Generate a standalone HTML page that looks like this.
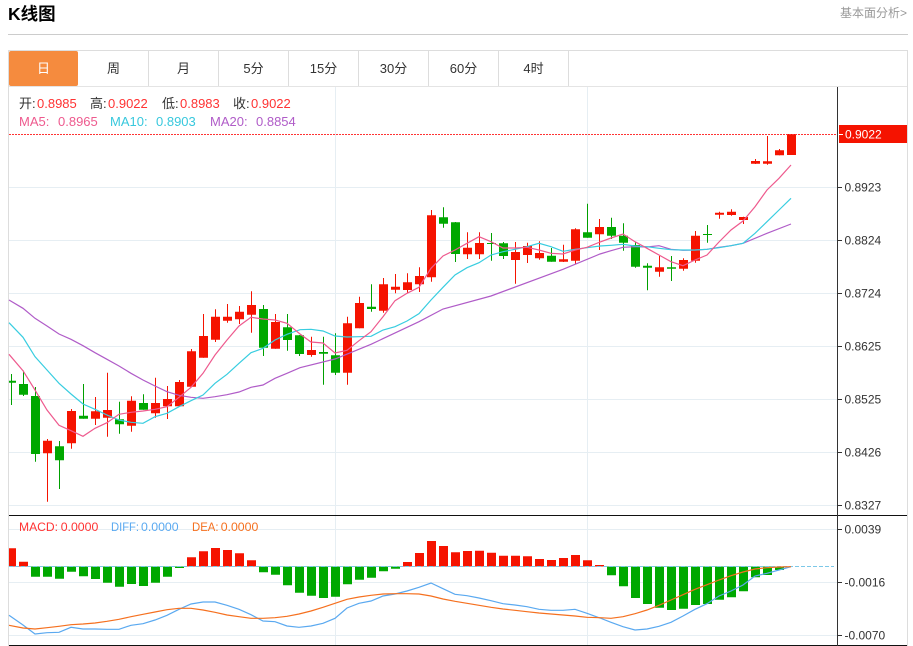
<!DOCTYPE html>
<html>
<head>
<meta charset="utf-8">
<style>
html,body{margin:0;padding:0;background:#fff;width:913px;height:646px;overflow:hidden;font-family:"Liberation Sans","Noto Sans CJK SC",sans-serif;}
.abs{position:absolute;white-space:nowrap;}
#title{left:8px;top:3px;font-size:17.5px;line-height:22px;font-weight:bold;color:#000;}
#more{left:840px;top:5px;font-size:12px;line-height:16px;color:#999;}
#rule{left:8px;top:34px;width:900px;height:1px;background:#ccc;}
#frame{left:8px;top:50px;width:898px;height:595px;border:1px solid #ddd;border-bottom:0;box-sizing:content-box;}
.tab{position:absolute;top:51px;height:35px;line-height:36px;text-align:center;font-size:13px;color:#333;border-right:1px solid #ddd;box-sizing:border-box;}
#act{background:#f58b3e;color:#fff;border-radius:2px;border-right:0;}
#tabline{left:9px;top:86px;width:898px;height:1px;background:#e4e4e4;}
svg{position:absolute;left:0;top:0;}
svg text{font-family:"Liberation Sans","Noto Sans CJK SC",sans-serif;}
</style>
</head>
<body>
<div class="abs" id="title">K线图</div>
<div class="abs" id="more">基本面分析&gt;</div>
<div class="abs" id="rule"></div>
<div class="abs" id="frame"></div>
<div class="tab" id="act" style="left:9px;width:69px">日</div>
<div class="tab" style="left:79px;width:70px">周</div>
<div class="tab" style="left:149px;width:70px">月</div>
<div class="tab" style="left:219px;width:70px">5分</div>
<div class="tab" style="left:289px;width:70px">15分</div>
<div class="tab" style="left:359px;width:70px">30分</div>
<div class="tab" style="left:429px;width:70px">60分</div>
<div class="tab" style="left:499px;width:70px">4时</div>
<div class="abs" id="tabline"></div>

<svg width="913" height="646" viewBox="0 0 913 646">
<!-- grid -->
<path d="M9 187.5H837M9 240.5H837M9 293.5H837M9 346.5H837M9 399.5H837M9 452.5H837M9 505.5H837M9 529.5H837M9 582.5H837M9 635.5H837M335.5 87V645M587.5 87V645" stroke="#e6eef3" stroke-width="1" fill="none"/>
<!-- red wicks -->
<path stroke="#f51300" fill="none" stroke-width="1" d="M47.5 439V501.7M71.5 409V448.7M95.5 397V425M107.5 372.7V436.7M131.5 396.3V431.7M155.5 377.7V417.7M167.5 386V419M179.5 380V406.7M191.5 349V386.7M203.5 314V357.7M215.5 309.3V342M227.5 304V322.7M239.5 306V324M251.5 291.3V332.7M275.5 314V348.7M311.5 336.7V356.7M347.5 316.7V384.7M359.5 296.7V328.3M383.5 278V312.7M395.5 274V293.3M407.5 273.3V292.7M419.5 267.3V292M431.5 210V281.7M467.5 232.3V259M479.5 232.3V259M515.5 242V283.7M527.5 242.7V263M539.5 241.3V259.7M563.5 244.7V262M575.5 228.3V264M599.5 219V250M659.5 256V276.7M683.5 258.3V270.7M695.5 231V262.7M719.5 211.7V218.7M731.5 209.3V215.7M743.5 216.7V224M755.5 159V164M767.5 136V164.7M779.5 149V155.3"/>
<!-- green wicks -->
<path stroke="#00a000" fill="none" stroke-width="1" d="M11.5 374V405M23.5 370.7V396M35.5 387V461.7M59.5 441V489M83.5 384V418.7M119.5 401.7V433.7M143.5 394.3V409.7M263.5 305V356M287.5 314V350.7M299.5 335V356M323.5 336.7V384.7M335.5 333.3V375M371.5 284.3V311.7M443.5 207.3V227.7M455.5 222V262M491.5 233V260.7M503.5 242V259M551.5 248V261.7M587.5 203.7V237.7M611.5 217.7V239M623.5 223.3V250.7M635.5 241.7V267.7M647.5 263.3V290.3M671.5 256V281M707.5 225V242.7"/>
<!-- red bodies -->
<path fill="#f51300" d="M43 440.7h9V453.3h-9zM67 411h9V443.3h-9zM91 411.3h9V418.7h-9zM103 410h9V417.7h-9zM127 400.7h9V425.7h-9zM151 403h9V413.3h-9zM163 399h9V406.3h-9zM175 382h9V406.3h-9zM187 351.3h9V386.7h-9zM199 336h9V357.7h-9zM211 316.7h9V339.7h-9zM223 316.7h9V320.7h-9zM235 311.7h9V319.3h-9zM247 305h9V314.7h-9zM271 322h9V348.7h-9zM307 350h9V355h-9zM343 323.3h9V372.7h-9zM355 303h9V328.3h-9zM379 284.3h9V310.7h-9zM391 286.7h9V289.7h-9zM403 282.3h9V290h-9zM415 276h9V284.3h-9zM427 215.3h9V277.3h-9zM463 247.7h9V254.3h-9zM475 243h9V254.3h-9zM511 252h9V260h-9zM523 246h9V255h-9zM535 253h9V258.3h-9zM559 259.3h9V261.7h-9zM571 229.3h9V260.7h-9zM595 227h9V234.3h-9zM655 267.3h9V271.7h-9zM679 260h9V268.7h-9zM691 235.7h9V260.7h-9zM715 212.7h9V214.7h-9zM727 211.7h9V215h-9zM739 217h9V220h-9zM751 161h9V163.7h-9zM763 161.3h9V163.7h-9zM775 150.3h9V155.3h-9zM787 134h9V155h-9z"/>
<!-- green bodies -->
<path fill="#00a800" d="M9 380.7h7V382.7h-7zM19 384h9V394.7h-9zM31 396h9V454h-9zM55 446.3h9V460.3h-9zM79 415.7h9V418.7h-9zM115 419.3h9V424.3h-9zM139 403h9V409.7h-9zM259 309h9V347.7h-9zM283 327.3h9V340h-9zM295 335.3h9V354h-9zM319 352h9V353.7h-9zM331 355.3h9V372.7h-9zM367 306.7h9V309h-9zM439 217.3h9V223.7h-9zM451 222.3h9V254h-9zM487 243h9V244h-9zM499 243.3h9V256h-9zM547 255.7h9V261.7h-9zM583 232.3h9V237.7h-9zM607 227h9V235.7h-9zM619 235.7h9V242.7h-9zM631 245h9V266.7h-9zM643 265.7h9V267.7h-9zM667 267.3h9V268.7h-9zM703 234h9V235h-9z"/>
<!-- MA lines -->
<polyline fill="none" stroke="#b05cc8" stroke-width="1.2" points="9,300 23,308.3 35,318.3 47,326 59,334 71,339.3 83,345.7 95,352.7 107,359.3 119,366 131,373.3 143,380 155,386 167,391.7 179,395.3 191,397.3 203,398.3 215,396.7 227,394.7 239,392 251,387.3 263,385 275,378.3 287,373.3 300,367.7 335,359 371,344.3 419,321.7 443,309 491,296 563,269.3 600,254 611,250.7 623,247.3 635,246.7 647,247 659,245.7 671,249.3 683,250.3 695,250 707,249.3 719,247.3 731,245.7 743,243.3 767,233.3 791,224"/>
<polyline fill="none" stroke="#38cde0" stroke-width="1.2" points="9,322.7 23,337.3 35,356.7 47,370 59,383.3 71,394 83,404 95,409.3 107,415 119,420 131,422.3 143,423.3 155,416.7 167,413.3 179,406.7 191,400.7 203,395 215,383.3 227,374.3 239,363.3 251,352.7 263,348.3 275,340 287,334.3 300,329.7 311,329.3 323,331 335,336 347,337 359,336.7 371,336.3 383,330 395,326.7 407,321 419,313.7 431,300 443,287.3 455,275 467,267.7 479,262.7 491,255 503,251.7 515,249.3 527,246.7 539,243.3 551,246.7 563,251.3 575,249.3 587,247.7 600,246 611,245.3 623,244.3 635,246 647,246.7 659,248.3 671,249.7 683,250 695,250 707,249.3 719,247.7 731,245.7 743,243.3 755,233.3 767,221.7 779,210 791,198.3"/>
<polyline fill="none" stroke="#ee5a8e" stroke-width="1.2" points="9,354.3 23,370.7 35,390 47,410 59,425.3 71,430.7 83,436.3 95,428.3 107,422.7 119,414.3 131,412.3 143,411 155,409.3 167,406.7 179,397.3 191,387.3 203,373.3 215,355 227,340 239,326 251,317.3 263,319 275,320 287,323.3 300,334 311,342 323,343 335,353 347,350.3 359,340.7 371,331.7 383,316.7 395,300.7 407,293.3 419,287.3 431,268.3 443,256 455,250 467,243.3 479,236.7 491,241.7 503,248 515,248 527,247.3 539,250 551,253.3 563,254 575,250 587,247.3 600,242 611,238 623,234 635,241.7 647,248.3 659,255 671,261.7 683,265.7 695,260 707,255 719,242 731,230 743,221 755,206.7 767,190 779,178.3 791,165"/>
<!-- last price dotted -->
<path d="M9 134.5H837" stroke="#f33" stroke-width="1" stroke-dasharray="2 1" fill="none"/>
<!-- MACD bars red -->
<path fill="#f51300" d="M9 548.3h7V566.5h-7zM19 561.7h9V566.5h-9zM187 557.3h9V566.5h-9zM199 551.3h9V566.5h-9zM211 548h9V566.5h-9zM223 550h9V566.5h-9zM235 553.3h9V566.5h-9zM247 560.3h9V566.5h-9zM403 562h9V566.5h-9zM415 553h9V566.5h-9zM427 541h9V566.5h-9zM439 546h9V566.5h-9zM451 552.3h9V566.5h-9zM463 551h9V566.5h-9zM475 550.7h9V566.5h-9zM487 552.7h9V566.5h-9zM499 555.7h9V566.5h-9zM511 555.7h9V566.5h-9zM523 556.3h9V566.5h-9zM535 559h9V566.5h-9zM547 560h9V566.5h-9zM559 558h9V566.5h-9zM571 555h9V566.5h-9zM583 560.3h9V566.5h-9zM595 565h9V566.5h-9z"/>
<!-- MACD bars green -->
<path fill="#00a800" d="M31 566.5h9V576.7h-9zM43 566.5h9V576.7h-9zM55 566.5h9V578.7h-9zM67 566.5h9V571.7h-9zM79 566.5h9V576.3h-9zM91 566.5h9V579h-9zM103 566.5h9V582.7h-9zM115 566.5h9V586.7h-9zM127 566.5h9V584h-9zM139 566.5h9V586h-9zM151 566.5h9V582.7h-9zM163 566.5h9V576.7h-9zM175 566.5h9V568h-9zM259 566.5h9V572.3h-9zM271 566.5h9V574.7h-9zM283 566.5h9V585.3h-9zM295 566.5h9V592.7h-9zM307 566.5h9V595.7h-9zM319 566.5h9V598h-9zM331 566.5h9V596.7h-9zM343 566.5h9V584.3h-9zM355 566.5h9V579.7h-9zM367 566.5h9V577.7h-9zM379 566.5h9V571.3h-9zM391 566.5h9V568.7h-9zM607 566.5h9V575.3h-9zM619 566.5h9V586.3h-9zM631 566.5h9V598h-9zM643 566.5h9V604h-9zM655 566.5h9V607.7h-9zM667 566.5h9V610h-9zM679 566.5h9V608.7h-9zM691 566.5h9V605h-9zM703 566.5h9V604h-9zM715 566.5h9V599.7h-9zM727 566.5h9V597.3h-9zM739 566.5h9V591.3h-9zM751 566.5h9V577.3h-9zM763 566.5h9V575h-9zM775 566.5h9V570h-9z"/>
<path d="M9 566.5H834" stroke="#7cc8e8" stroke-width="1" stroke-dasharray="4 2" fill="none"/>
<!-- DIFF -->
<polyline fill="none" stroke="#5aa9f0" stroke-width="1.2" points="9,615.3 23,625 35,634 47,632.7 59,632.3 71,627.3 83,629 95,629 107,629.3 119,629.3 131,625.3 143,623.7 155,620 167,615.3 179,609.3 191,604 203,602 215,602 227,605.3 239,609.3 251,614.7 263,621 275,621.7 287,626 299,627.3 311,626 323,623.3 335,618.3 347,608 359,603.3 371,601 383,596 395,594 407,591 419,587.3 431,583 443,588.7 455,594.3 467,595.7 479,598 491,600.7 503,603.7 515,605 527,606.7 539,609.3 551,610.3 563,610.3 575,609.3 587,613.3 600,618 611,622.3 623,626.7 635,630 647,629 659,626.3 671,622.3 683,616 695,609.3 707,603.7 719,596 731,591 743,585 755,576 767,573.3 779,570 791,566.7"/>
<!-- DEA -->
<polyline fill="none" stroke="#f5701f" stroke-width="1.2" points="9,625.3 23,628 35,629 47,627.7 59,626.3 71,624.7 83,624 95,623 107,621.3 119,619.3 131,616.7 143,614.3 155,612 167,609.7 179,608.3 191,608.3 203,610 215,612.3 227,615 239,616.7 251,618.3 263,618.3 275,617.7 287,616.3 299,614 311,611 323,607.3 335,603.3 347,599.3 359,597 371,595.3 383,594 395,593.7 407,593.7 419,594 431,596 443,599 455,601.3 467,603.3 479,605.3 491,607.3 503,609 515,610.3 527,611.7 539,613 551,614 563,615 575,616 587,617.3 600,617.7 611,618.3 623,616.7 635,613.7 647,610 659,605.3 671,600 683,594.7 695,589.3 707,584.7 719,580 731,575.7 743,572 755,569 767,567.7 779,567 791,566.7"/>
<!-- axes -->
<path d="M9 515.5H907M9 645.5H907" stroke="#111" stroke-width="1" fill="none"/>
<path d="M837.5 87V646" stroke="#333" stroke-width="1" fill="none"/>
<path d="M838 187.5h4M838 240.5h4M838 293.5h4M838 346.5h4M838 399.5h4M838 452.5h4M838 505.5h4M838 529.5h4M838 582.5h4M838 635.5h4" stroke="#333" stroke-width="1" fill="none"/>
<rect x="839" y="125" width="68" height="18" fill="#f51300"/>
<path d="M839 134.5h4" stroke="#fff" stroke-width="1"/>
<!-- axis labels -->
<g font-size="12" fill="#333">
<text x="844.5" y="191.5">0.8923</text>
<text x="844.5" y="244.5">0.8824</text>
<text x="844.5" y="297.5">0.8724</text>
<text x="844.5" y="350.5">0.8625</text>
<text x="844.5" y="403.5">0.8525</text>
<text x="844.5" y="456.5">0.8426</text>
<text x="844.5" y="509.5">0.8327</text>
<text x="844.5" y="533.5">0.0039</text>
<text x="844.5" y="586.5">-0.0016</text>
<text x="844.5" y="639.5">-0.0070</text>
<text x="845" y="138.5" fill="#fff">0.9022</text>
</g>
<!-- legend -->
<g font-size="13">
<text x="19" y="108" fill="#333">开:</text><text x="37" y="108" fill="#f33">0.8985</text>
<text x="90" y="108" fill="#333">高:</text><text x="108" y="108" fill="#f33">0.9022</text>
<text x="162" y="108" fill="#333">低:</text><text x="180" y="108" fill="#f33">0.8983</text>
<text x="233" y="108" fill="#333">收:</text><text x="251" y="108" fill="#f33">0.9022</text>
<text x="19" y="126" fill="#ee5a8e">MA5:</text><text x="58" y="126" fill="#ee5a8e">0.8965</text>
<text x="110" y="126" fill="#38c8dd">MA10:</text><text x="156" y="126" fill="#38c8dd">0.8903</text>
<text x="210" y="126" fill="#b05cc8">MA20:</text><text x="256" y="126" fill="#b05cc8">0.8854</text>
</g>
<g font-size="12.3">
<text x="19" y="531" fill="#f33" textLength="39" lengthAdjust="spacingAndGlyphs">MACD:</text><text x="60.7" y="531" fill="#f33">0.0000</text>
<text x="111" y="531" fill="#5aa9f0" textLength="28" lengthAdjust="spacingAndGlyphs">DIFF:</text><text x="141" y="531" fill="#5aa9f0">0.0000</text>
<text x="192" y="531" fill="#f5701f" textLength="26.5" lengthAdjust="spacingAndGlyphs">DEA:</text><text x="220.7" y="531" fill="#f5701f">0.0000</text>
</g>
</svg>
</body>
</html>
